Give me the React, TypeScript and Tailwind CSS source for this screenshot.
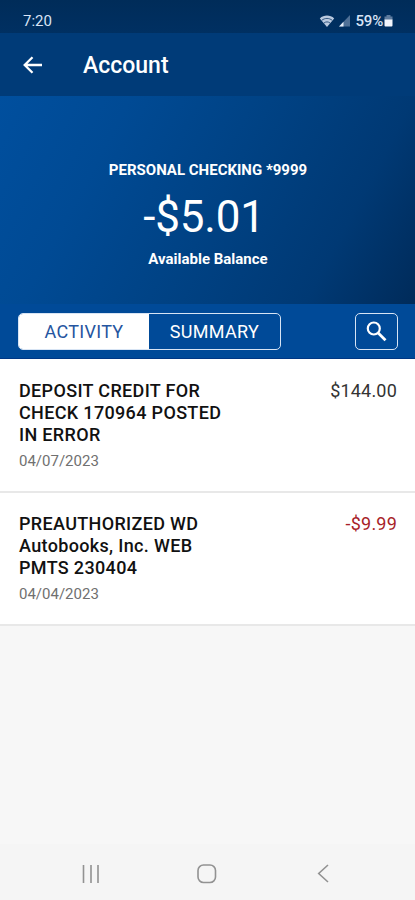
const transactions = [
  {
    lines: ["DEPOSIT CREDIT FOR", "CHECK 170964 POSTED", "IN ERROR"],
    date: "04/07/2023",
    amount: "$144.00",
    negative: false,
  },
  {
    lines: ["PREAUTHORIZED WD", "Autobooks, Inc. WEB", "PMTS 230404"],
    date: "04/04/2023",
    amount: "-$9.99",
    negative: true,
  },
];

function StatusBar() {
  return (
    <div className="flex h-[33px] items-center bg-linear-to-b from-[#002c59] to-[#003062] pt-2 pr-[22px] pl-[23px] text-[#d9e4f6]">
      <span className="text-[15px] leading-4">7:20</span>
      <svg className="ml-auto" width="16" height="14" viewBox="0 0 16 14">
        <path d="M8 13 .8 4.400C4.800.600 11.200.600 15.200 4.400Z" fill="#b9c9df" />
        <path
          d="M2.800 6.300c3-2.500 7.400-2.500 10.400 0M5 9c1.800-1.500 4.200-1.500 6 0"
          fill="none"
          stroke="#123b69"
          strokeWidth="0.800"
        />
      </svg>
      <svg className="mr-px ml-1" width="12" height="13" viewBox="0 0 12 13">
        <path d="M0 12.500 11 1V12.500Z" fill="#4f7096" />
        <path d="M0 12.500 4.500 7.800V12.500Z" fill="#e4ecf8" />
      </svg>
      <span className="ml-1 text-[15px] leading-4 font-medium tracking-[-0.2px]">
        59%
      </span>
      <svg className="ml-px" width="9" height="13" viewBox="0 0 9 13">
        <path d="M2.500 1h4v1.500H8.500V6H.5V2.500h2Z" fill="#5d7b9e" />
        <path d="M.5 5.500h8V11.500q0 1-1 1h-6q-1 0-1-1Z" fill="#f1f5fc" />
      </svg>
    </div>
  );
}

function Header() {
  return (
    <header className="flex h-[63px] items-center bg-[#003b78] pl-[23px] text-white">
      <svg width="20" height="18" viewBox="0 0 20 18" fill="none">
        <path
          d="M19 9H2M9.500 1.200 1.700 9l7.800 7.800"
          stroke="currentColor"
          strokeWidth="2.300"
        />
      </svg>
      <h1 className="ml-[40px] pt-[3px] text-[23px] leading-7 font-medium">Account</h1>
    </header>
  );
}

function Balance() {
  return (
    <section className="flex h-[208px] flex-col items-center bg-[linear-gradient(118deg,#004f9e_0%,#004a94_25%,#004284_52%,#003974_79%,#002b5a_100%)] pt-[64px] text-white">
      <p className="pl-px text-[15px] leading-5 font-bold">
        PERSONAL CHECKING *9999
      </p>
      <p className="mt-[10px] mr-[7px] text-[44px] leading-[54px] tracking-[-0.2px]">
        -$5.01
      </p>
      <p className="mt-[5px] pl-px text-[15px] leading-5 font-bold">
        Available Balance
      </p>
    </section>
  );
}

function Tabs() {
  return (
    <div className="flex h-[55px] items-center justify-between border-b border-[#003784] bg-[#004a98] pr-[17px] pl-[18px]">
      <div className="flex h-[37px] w-[263px] overflow-hidden rounded-[5px] border border-[#d7e4f4] text-[18px] tracking-[0.3px]">
        <button className="w-[130px] bg-white pt-px text-[#2555a0]">ACTIVITY</button>
        <button className="flex-1 pt-px text-white">SUMMARY</button>
      </div>
      <button className="flex h-[37px] w-[43px] items-center justify-center rounded-[5px] border border-[#d7e4f4] text-white">
        <svg width="21" height="21" viewBox="0 0 21 21" fill="none">
          <circle cx="7.800" cy="7.500" r="6" stroke="currentColor" strokeWidth="2.200" />
          <path d="m12.200 12 7.300 7.200" stroke="currentColor" strokeWidth="2.800" />
        </svg>
      </button>
    </div>
  );
}

function SystemNav() {
  return (
    <nav className="flex h-14 items-center bg-[#f5f5f5] pt-[3px] pl-[82px] text-[#929292]">
      <svg width="18" height="18" viewBox="0 0 18 18">
        <path d="M1.500 0v18M9 0v18M16 0v18" stroke="currentColor" strokeWidth="1.600" />
      </svg>
      <svg className="ml-[97px]" width="20" height="20" viewBox="0 0 20 20" fill="none">
        <rect x="1" y="1" width="17.500" height="17.500" rx="5.500" stroke="currentColor" strokeWidth="1.600" />
      </svg>
      <svg className="ml-[100px]" width="12" height="19" viewBox="0 0 12 19" fill="none">
        <path d="m11 1-9.300 8.500L11 18" stroke="currentColor" strokeWidth="1.600" />
      </svg>
    </nav>
  );
}

export default function App() {
  return (
    <div className="flex h-[900px] w-[415px] flex-col overflow-hidden bg-[#f7f7f7] font-[Roboto,sans-serif]">
      <StatusBar />
      <Header />
      <Balance />
      <Tabs />
      <main className="flex-1">
        <div className="bg-white pt-px">
          {transactions.map((item) => (
            <article
              key={item.date}
              className="flex h-[133px] justify-between border-b-2 border-[#e8e8e8] pt-[20px] pr-[18px] pl-[19px]"
            >
              <div>
                <h2 className="text-[18px] leading-[22px] font-medium tracking-[0.34px] text-[#111]">
                  {item.lines.map((line) => (
                    <span key={line} className="block">
                      {line}
                    </span>
                  ))}
                </h2>
                <p className="mt-[5px] text-[15px] leading-5 text-[#707070]">
                  {item.date}
                </p>
              </div>
              <span
                className={
                  item.negative
                    ? "text-[18px] leading-[22px] tracking-[0.2px] text-[#a81f29]"
                    : "text-[18px] leading-[22px] tracking-[0.2px] text-[#333]"
                }
              >
                {item.amount}
              </span>
            </article>
          ))}
        </div>
      </main>
      <SystemNav />
    </div>
  );
}
